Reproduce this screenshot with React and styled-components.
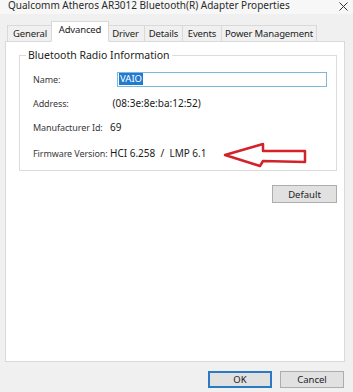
import React from 'react';
import styled, { createGlobalStyle } from 'styled-components';

const GlobalStyle = createGlobalStyle`
  html, body {
    margin: 0;
    padding: 0;
    background: #f0f0f0;
  }
  body {
    font-family: "Noto Sans", "Open Sans", sans-serif;
    color: #1e1e1e;
  }
`;

const Window = styled.div`
  width: 353px;
  height: 392px;
  overflow: hidden;
  display: flex;
  flex-direction: column;
  background: #f0f0f0;
`;

const TitleBar = styled.div`
  height: 14px;
  background: #f7f7f7;
  display: flex;
  align-items: flex-start;
  justify-content: space-between;
  padding: 0 5px 0 8px;
`;

const TitleText = styled.div`
  font-size: 10px;
  line-height: 11px;
  color: #2a2a2a;
  white-space: nowrap;
`;

const CloseIcon = styled.svg`
  margin-top: 2px;
  flex: none;
`;

const TabStrip = styled.div`
  height: 28px;
  display: flex;
  align-items: flex-end;
  padding-left: 7px;
  position: relative;
  z-index: 1;
  margin-bottom: -1px;
`;

const Tab = styled.div`
  width: ${p => p.$w}px;
  height: ${p => (p.$active ? '21px' : '17px')};
  margin: 0 ${p => (p.$active ? '-2px' : '0')};
  box-sizing: border-box;
  border: 1px solid #d9d9d9;
  border-bottom: ${p => (p.$active ? '1px solid #fff' : '1px solid #d9d9d9')};
  border-left: ${p => (p.$first || p.$active ? '1px solid #d9d9d9' : 'none')};
  background: ${p => (p.$active ? '#fff' : '#f0f0f0')};
  font-size: 9.5px;
  line-height: ${p => (p.$active ? '16px' : '15px')};
  text-align: center;
  letter-spacing: -0.15px;
  color: #222;
  white-space: nowrap;
  position: relative;
  z-index: ${p => (p.$active ? 2 : 1)};
`;

const Panel = styled.div`
  margin: 0 8px 0 5px;
  height: 321px;
  box-sizing: border-box;
  background: #fff;
  border: 1px solid #d9d9d9;
  padding: 7px 7px 0 13px;
  display: flex;
  flex-direction: column;
`;

const GroupBox = styled.fieldset`
  margin: 0;
  padding: 5px 9px 5px 13px;
  border: 1px solid #dcdcdc;
  min-width: 0;
`;

const Legend = styled.legend`
  margin-left: -7px;
  padding: 0 2px;
  font-size: 10.5px;
  line-height: 13px;
  color: #222;
`;

const InfoRow = styled.div`
  height: 24px;
  display: grid;
  grid-template-columns: 77px 1fr;
  align-items: center;
  margin-top: ${p => p.$gap || 0}px;
`;

const Label = styled.span`
  font-size: 9px;
  letter-spacing: -0.1px;
  color: #3a3a3a;
  white-space: nowrap;
`;

const Value = styled.div`
  font-size: 10px;
  color: #1a1a1a;
  white-space: pre;
  display: flex;
  align-items: center;
`;

const NameInput = styled.div`
  margin-left: 7px;
  height: 15px;
  box-sizing: border-box;
  border: 1px solid #7eb8d8;
  display: flex;
  align-items: center;
  padding: 0 1px;
`;

const Selected = styled.span`
  background: #1f7ad1;
  color: #fff;
  font-size: 9.5px;
  line-height: 12px;
  padding: 0 1px;
`;

const Arrow = styled.svg`
  margin: -2px 20px -6px auto;
  flex: none;
`;

const ButtonRow = styled.div`
  display: flex;
  justify-content: flex-end;
  gap: 8px;
  margin-top: ${p => p.$top}px;
  padding-right: ${p => p.$right || 0}px;
`;

const Button = styled.button`
  width: ${p => p.$w || 64}px;
  height: ${p => p.$h || 18}px;
  box-sizing: border-box;
  padding: 0;
  background: #e1e1e1;
  border: ${p => (p.$primary ? '2px solid #2b7bc4' : '1px solid #adadad')};
  font-family: "Noto Sans", "Open Sans", sans-serif;
  font-size: 9.5px;
  color: #222;
`;

const tabs = [
  { name: 'General', w: 46 },
  { name: 'Advanced', w: 58 },
  { name: 'Driver', w: 38 },
  { name: 'Details', w: 38 },
  { name: 'Events', w: 39 },
  { name: 'Power Management', w: 95 },
];

export default function App() {
  return (
    <>
      <GlobalStyle />
      <Window>
        <TitleBar>
          <TitleText>Qualcomm Atheros AR3012 Bluetooth(R) Adapter Properties</TitleText>
          <CloseIcon width="9" height="9" viewBox="0 0 9 9">
            <path d="M0.5 0.5 L8.5 8.5 M8.5 0.5 L0.5 8.5" stroke="#333" strokeWidth="1" />
          </CloseIcon>
        </TitleBar>
        <TabStrip>
          {tabs.map((t, i) => (
            <Tab key={t.name} $w={t.w} $active={t.name === 'Advanced'} $first={i === 0}>
              {t.name}
            </Tab>
          ))}
        </TabStrip>
        <Panel>
          <GroupBox>
            <Legend>Bluetooth Radio Information</Legend>
            <InfoRow>
              <Label>Name:</Label>
              <NameInput><Selected>VAIO</Selected></NameInput>
            </InfoRow>
            <InfoRow>
              <Label>Address:</Label>
              <Value> (08:3e:8e:ba:12:52)</Value>
            </InfoRow>
            <InfoRow>
              <Label>Manufacturer Id:</Label>
              <Value>69</Value>
            </InfoRow>
            <InfoRow $gap={2}>
              <Label>Firmware Version:</Label>
              <Value>
                HCI 6.258  /  LMP 6.1
                <Arrow width="84" height="26" viewBox="0 0 84 26">
                  <path
                    d="M2 13 L40 2 L40 9 L82 9 L82 20 L40 19 L37 24 Z"
                    fill="#fff"
                    stroke="#d2232a"
                    strokeWidth="2.5"
                    strokeLinejoin="round"
                  />
                </Arrow>
              </Value>
            </InfoRow>
          </GroupBox>
          <ButtonRow $top={14}>
            <Button $w={65}>Default</Button>
          </ButtonRow>
        </Panel>
        <ButtonRow $top={9} $right={9}>
          <Button $primary $h={17}>OK</Button>
          <Button $h={17}>Cancel</Button>
        </ButtonRow>
      </Window>
    </>
  );
}
